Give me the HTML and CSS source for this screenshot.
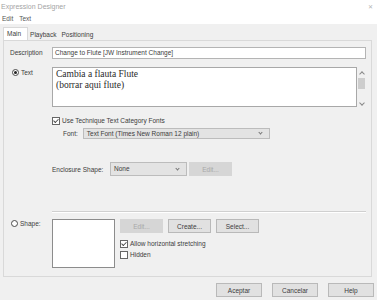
FILE: index.html
```html
<!DOCTYPE html>
<html lang="en">
<head>
  <meta charset="UTF-8" />
  <title>Expression Designer</title>
  <link rel="stylesheet" href="styles.css">
</head>
<body>
  <div class="titlebar">
    <span class="title">Expression Designer</span>
    <span class="close">&#x2715;</span>
  </div>
  <div class="menubar">
    <span>Edit</span>
    <span>Text</span>
  </div>

  <div class="dialog">
    <div class="tabs">
      <span class="tab active">Main</span>
      <span class="tab">Playback</span>
      <span class="tab">Positioning</span>
    </div>

    <div class="panel">
      <div class="row desc-row">
        <span class="label">Description</span>
        <div class="field desc">Change to Flute [JW Instrument Change]</div>
      </div>

      <div class="row text-row">
        <span class="label radio-label"><span class="radio on"></span>Text</span>
        <div class="textbox">
          <div class="text-area">Cambia a flauta Flute<br>(borrar aqui flute)</div>
          <div class="scrollbar">
            <span class="chev up"></span>
            <span class="thumb"></span>
            <span class="chev down"></span>
          </div>
        </div>
      </div>

      <div class="check-row use-fonts">
        <span class="check on"></span>Use Technique Text Category Fonts
      </div>

      <div class="font-row">
        <span class="small-label">Font:</span>
        <div class="select font-select">Text Font (Times New Roman 12 plain)<span class="arrow"></span></div>
      </div>

      <div class="enc-row">
        <span class="small-label">Enclosure Shape:</span>
        <div class="select enc-select">None<span class="arrow"></span></div>
        <span class="btn disabled">Edit...</span>
      </div>

      <div class="separator"></div>

      <div class="row shape-row">
        <span class="label radio-label"><span class="radio"></span>Shape:</span>
        <div class="shape-box"></div>
        <div class="shape-side">
          <div class="shape-buttons">
            <span class="btn disabled">Edit...</span>
            <span class="btn">Create...</span>
            <span class="btn">Select...</span>
          </div>
          <div class="check-row"><span class="check on"></span>Allow horizontal stretching</div>
          <div class="check-row"><span class="check"></span>Hidden</div>
        </div>
      </div>
    </div>

    <div class="footer">
      <span class="btn big">Aceptar</span>
      <span class="btn big">Cancelar</span>
      <span class="btn big">Help</span>
    </div>
  </div>
</body>
</html>
```

FILE: styles.css
```css
body {
  margin: 0;
  width: 377px;
  height: 300px;
  overflow: hidden;
  font-family: 'Liberation Sans', Arial, sans-serif;
  font-size: 6.5px;
  color: #3c3c3c;
  background: #f0f0f0;
}

.titlebar {
  height: 12px;
  background: #fff;
  display: flex;
  justify-content: space-between;
  align-items: center;
  padding: 0 4px 0 1px;
}

.title {
  font-size: 7px;
  color: #a4a4a4;
}

.close {
  font-size: 6px;
  color: #b4b4b4;
}

.menubar {
  height: 12px;
  background: #fff;
  display: flex;
  align-items: center;
  gap: 6px;
  padding-left: 2px;
  font-size: 6.5px;
  color: #555;
}

.dialog {
  padding-top: 4px;
}

.tabs {
  display: flex;
  align-items: flex-end;
  height: 12px;
  padding-left: 3px;
}

.tab {
  padding: 0 3px 0 2px;
  height: 11px;
  line-height: 11px;
}

.tab.active {
  background: #fff;
  border: 1px solid #d9d9d9;
  border-bottom: none;
  height: 12px;
  line-height: 12px;
  padding: 0 6px 0 3px;
}

.panel {
  margin: 0 5px 0 3px;
  border: 1px solid #d9d9d9;
  background: #f0f0f0;
  padding: 6px 5px 6px 6px;
  height: 223px;
  box-sizing: content-box;
}

.row {
  display: flex;
  align-items: flex-start;
}

.label {
  width: 42px;
  flex-shrink: 0;
}

.desc-row .label {
  line-height: 12px;
}

.field {
  flex: 1;
  height: 10px;
  line-height: 10px;
  border: 1px solid #b4b4b4;
  background: #fff;
  padding-left: 2px;
}

.text-row {
  margin-top: 8px;
}

.radio-label {
  display: flex;
  align-items: center;
  gap: 2px;
  padding-left: 2px;
  margin-top: 2px;
  width: 40px;
}

.radio {
  width: 7px;
  height: 7px;
  border: 1px solid #4a4a4a;
  border-radius: 50%;
  background: #fff;
  box-sizing: border-box;
  position: relative;
}

.radio.on::after {
  content: "";
  position: absolute;
  left: 1px;
  top: 1px;
  width: 3px;
  height: 3px;
  border-radius: 50%;
  background: #222;
}

.textbox {
  flex: 1;
  display: flex;
  height: 40px;
}

.text-area {
  flex: 1;
  border: 1px solid #a8a8a8;
  background: #fff;
  font-family: 'Liberation Serif', 'Times New Roman', serif;
  font-size: 9.5px;
  line-height: 11px;
  color: #2a2a2a;
  padding: 1px 3px;
}

.scrollbar {
  width: 9px;
  display: flex;
  flex-direction: column;
  align-items: center;
  padding-top: 4px;
}

.chev {
  width: 3px;
  height: 3px;
  border-left: 1px solid #888;
  border-top: 1px solid #888;
}

.chev.up {
  transform: rotate(45deg);
  margin-top: 1px;
}

.chev.down {
  transform: rotate(225deg);
  margin-top: 12px;
}

.thumb {
  width: 7px;
  height: 11px;
  background: #cdcdcd;
  margin-top: 2px;
}

.check-row {
  display: flex;
  align-items: center;
  gap: 2px;
  height: 9px;
}

.use-fonts {
  margin: 9px 0 0 42px;
}

.check {
  width: 8px;
  height: 8px;
  border: 1px solid #666;
  background: #fff;
  box-sizing: border-box;
  position: relative;
}

.check.on::after {
  content: "";
  position: absolute;
  left: 1px;
  top: 1px;
  width: 4px;
  height: 2px;
  border-left: 1px solid #444;
  border-bottom: 1px solid #444;
  transform: rotate(-45deg);
  transform-origin: 2px 2px;
}

.font-row {
  display: flex;
  align-items: center;
  margin: 3px 0 0 53px;
  gap: 5px;
}

.select {
  height: 9px;
  line-height: 9px;
  background: #e3e3e3;
  border: 1px solid #bcbcbc;
  padding-left: 3px;
  display: flex;
  justify-content: space-between;
  align-items: center;
}

.font-select {
  width: 182px;
}

.arrow {
  width: 2px;
  height: 2px;
  border-right: 1px solid #777;
  border-bottom: 1px solid #777;
  transform: rotate(45deg);
  margin: 0 7px 2px 0;
}

.enc-row {
  display: flex;
  align-items: center;
  margin: 23px 0 0 42px;
}

.enc-row .small-label {
  width: 58px;
}

.enc-select {
  width: 72px;
  height: 12px;
  line-height: 12px;
}

.btn {
  display: inline-flex;
  align-items: center;
  justify-content: center;
  height: 12px;
  width: 41px;
  background: #e1e1e1;
  border: 1px solid #b9b9b9;
}

.btn.disabled {
  background: #d6d6d6;
  border-color: #d6d6d6;
  color: #a8a8a8;
}

.enc-row .btn {
  margin-left: 2px;
}

.separator {
  margin: 35px 0 0 42px;
  height: 0;
  border-top: 1px solid #d0d0d0;
  border-bottom: 1px solid #fff;
}

.shape-row {
  margin-top: 6px;
}

.shape-row .radio-label {
  margin-top: 1px;
  padding-left: 1px;
  width: 41px;
}

.shape-box {
  width: 61px;
  height: 47px;
  border: 1px solid #8c8c8c;
  background: #fff;
}

.shape-side {
  margin-left: 5px;
  display: flex;
  flex-direction: column;
  gap: 2px;
}

.shape-buttons {
  display: flex;
  gap: 5px;
  margin-bottom: 4px;
}

.footer {
  display: flex;
  justify-content: flex-end;
  gap: 10px;
  padding: 6px 3px 0 0;
}

.btn.big {
  width: 44px;
  height: 12px;
}
```
